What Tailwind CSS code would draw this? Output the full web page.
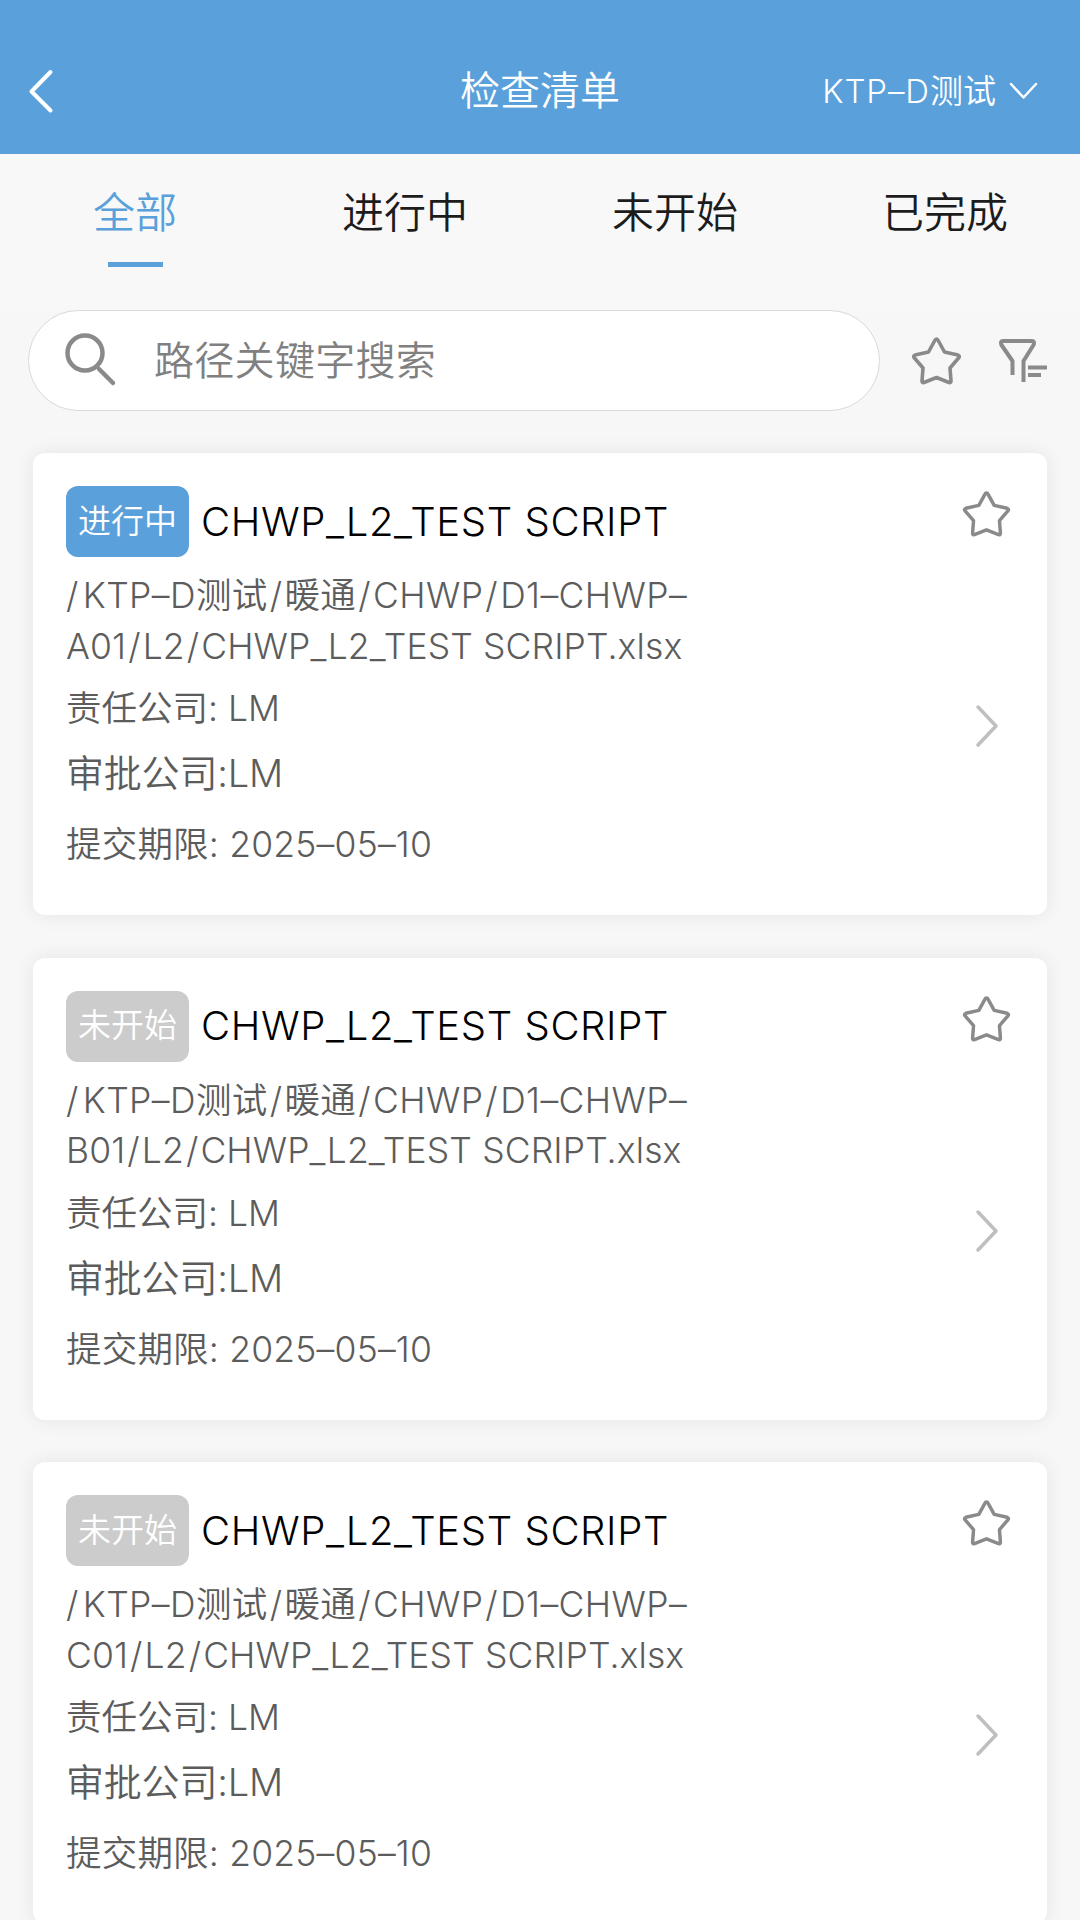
<!DOCTYPE html>
<html lang="zh-CN">
  <head>
    <meta charset="UTF-8" />
    <meta name="viewport" content="width=device-width, initial-scale=1.0" />
    <title>检查清单</title>
    <script src="https://cdn.jsdelivr.net/npm/@tailwindcss/browser@4"></script>
  </head>
  <body class="h-[1920px] overflow-hidden bg-[#f7f7f7] font-['Inter','Noto_Sans_CJK_SC',sans-serif] font-[350]">
    <!-- Header -->
    <header class="grid h-[154px] grid-cols-3 items-center bg-[#5aa0da] pt-[28px] text-white">
      <svg class="ml-[27px] h-[46px] w-[28px]" viewBox="0 0 28 46" fill="none" stroke="currentColor" stroke-width="4" stroke-linecap="round" stroke-linejoin="round">
        <path d="M23.5 4L4.5 23.5L23.5 42.5" />
      </svg>
      <h1 class="text-center text-[40px] leading-[40px]">检查清单</h1>
      <div class="flex items-center justify-end pr-[42px]">
        <span class="text-[33px] leading-[40px]"><span class="tracking-[0.9px]">KTP–D</span>测试</span>
        <svg class="ml-[13px] h-[18px] w-[29px]" viewBox="0 0 29 18" fill="none" stroke="currentColor" stroke-width="2.5" stroke-linecap="round" stroke-linejoin="round">
          <path d="M2 2L14.5 15.5L27 2" />
        </svg>
      </div>
    </header>

    <!-- Tabs -->
    <nav class="grid h-[156px] grid-cols-4 bg-[#f8f8f8] pt-[34px] text-center text-[42px] leading-[50px] text-[#1c1c1c]">
      <div class="flex flex-col items-center gap-[24px] text-[#5aa0da]">
        全部
        <span class="h-[5px] w-[55px] bg-[#5aa0da]"></span>
      </div>
      <div>进行中</div>
      <div>未开始</div>
      <div>已完成</div>
    </nav>

    <!-- Search -->
    <div class="flex items-center text-[#8a8a8a]">
      <div class="ml-[28px] flex h-[101px] w-[852px] items-center rounded-full border border-[#d9d9d9] bg-white pl-[34px]">
        <svg class="h-[56px] w-[56px]" viewBox="0 0 56 56" fill="none" stroke="currentColor" stroke-width="4.5" stroke-linecap="round">
          <circle cx="22" cy="20" r="17.5" />
          <path d="M36 36L50 50" />
        </svg>
        <span class="ml-[35px] text-[40px] leading-[48px] tracking-[0.3px] text-[#808080]">路径关键字搜索</span>
      </div>
      <svg class="ml-[31px] h-[50px] w-[51px]" viewBox="0 0 51 50" fill="none" stroke="currentColor" stroke-width="3.6" stroke-linejoin="round">
        <path d="M25.5 3Q26.500 3 27.200 4.500L33.500 16L47 19Q49 20 48 21.500L39 32L40 45Q40 47 38 46.500L25.500 41.500L13 46.500Q11 47 11 45L12 32L3 21.500Q2 20 4 19L17.500 16L23.800 4.500Q24.500 3 25.500 3Z" />
      </svg>
      <svg class="ml-[36px] h-[46px] w-[50px]" viewBox="0 0 50 46" fill="none" stroke="currentColor" stroke-width="4" stroke-linejoin="round">
        <path d="M14.5 37V23L3.5 7Q2 3 5 3H34Q37 3 35.5 7L25.5 23V44M30 29.500H49M30 37H43" />
      </svg>
    </div>

    <!-- Checklist cards -->
    <main class="flex flex-col gap-[42.5px] px-[33px] pt-[42px] text-[35.5px] text-[#5c5c5c]">
      <article class="flex h-[462px] shrink-0 justify-between rounded-xl bg-white pt-[33px] pr-[36px] pl-[33px] shadow-[0_0_20px_rgba(0,0,0,0.08)]">
        <div>
          <div class="flex items-center">
            <span class="flex h-[71px] w-[123px] items-center justify-center rounded-xl bg-[#5aa0da] text-[33px] text-white">进行中</span>
            <h2 class="ml-[12px] text-[40px] leading-[50px] tracking-[0.6px] text-black">CHWP_L2_TEST SCRIPT</h2>
          </div>
          <p class="mt-[14px] leading-[50.5px] tracking-[0.4px] whitespace-nowrap"><span class="mr-[4px]">/</span>KTP–D测试<span class="mx-[2px]">/</span>暖通<span class="mx-[2px]">/</span>CHWP<span class="mx-[2px]">/</span>D1–CHWP–</p>
          <p class="leading-[50.5px] tracking-[0.12px] whitespace-nowrap">A01<span class="mx-[2px]">/</span>L2<span class="mx-[2px]">/</span>CHWP_L2_TEST SCRIPT.xlsx</p>
          <p class="mt-[12px] leading-[50px]">责任公司: LM</p>
          <p class="mt-[14px] text-[38px] leading-[50px] tracking-[-0.2px]">审批公司:LM</p>
          <p class="mt-[22px] leading-[50px] tracking-[0.2px]">提交期限: 2025–05–10</p>
        </div>
        <div class="flex flex-col items-center">
          <svg class="mt-[4px] h-[48px] w-[49px] text-[#8a8a8a]" viewBox="0 0 51 50" fill="none" stroke="currentColor" stroke-width="3.6" stroke-linejoin="round">
            <path d="M25.5 3Q26.500 3 27.200 4.500L33.500 16L47 19Q49 20 48 21.500L39 32L40 45Q40 47 38 46.500L25.500 41.500L13 46.500Q11 47 11 45L12 32L3 21.500Q2 20 4 19L17.500 16L23.800 4.500Q24.500 3 25.500 3Z" />
          </svg>
          <svg class="mt-[166px] h-[44px] w-[24px] text-[#bfbfbf]" viewBox="0 0 24 44" fill="none" stroke="currentColor" stroke-width="3.5" stroke-linecap="round" stroke-linejoin="round">
            <path d="M3 3L21 22L3 41" />
          </svg>
        </div>
      </article>

      <article class="flex h-[462px] shrink-0 justify-between rounded-xl bg-white pt-[33px] pr-[36px] pl-[33px] shadow-[0_0_20px_rgba(0,0,0,0.08)]">
        <div>
          <div class="flex items-center">
            <span class="flex h-[71px] w-[123px] items-center justify-center rounded-xl bg-[#cccccc] text-[33px] text-white">未开始</span>
            <h2 class="ml-[12px] text-[40px] leading-[50px] tracking-[0.6px] text-black">CHWP_L2_TEST SCRIPT</h2>
          </div>
          <p class="mt-[14px] leading-[50.5px] tracking-[0.4px] whitespace-nowrap"><span class="mr-[4px]">/</span>KTP–D测试<span class="mx-[2px]">/</span>暖通<span class="mx-[2px]">/</span>CHWP<span class="mx-[2px]">/</span>D1–CHWP–</p>
          <p class="leading-[50.5px] tracking-[0.12px] whitespace-nowrap">B01<span class="mx-[2px]">/</span>L2<span class="mx-[2px]">/</span>CHWP_L2_TEST SCRIPT.xlsx</p>
          <p class="mt-[12px] leading-[50px]">责任公司: LM</p>
          <p class="mt-[14px] text-[38px] leading-[50px] tracking-[-0.2px]">审批公司:LM</p>
          <p class="mt-[22px] leading-[50px] tracking-[0.2px]">提交期限: 2025–05–10</p>
        </div>
        <div class="flex flex-col items-center">
          <svg class="mt-[4px] h-[48px] w-[49px] text-[#8a8a8a]" viewBox="0 0 51 50" fill="none" stroke="currentColor" stroke-width="3.6" stroke-linejoin="round">
            <path d="M25.5 3Q26.500 3 27.200 4.500L33.500 16L47 19Q49 20 48 21.500L39 32L40 45Q40 47 38 46.500L25.500 41.500L13 46.500Q11 47 11 45L12 32L3 21.500Q2 20 4 19L17.500 16L23.800 4.500Q24.500 3 25.500 3Z" />
          </svg>
          <svg class="mt-[166px] h-[44px] w-[24px] text-[#bfbfbf]" viewBox="0 0 24 44" fill="none" stroke="currentColor" stroke-width="3.5" stroke-linecap="round" stroke-linejoin="round">
            <path d="M3 3L21 22L3 41" />
          </svg>
        </div>
      </article>

      <article class="flex h-[462px] shrink-0 justify-between rounded-xl bg-white pt-[33px] pr-[36px] pl-[33px] shadow-[0_0_20px_rgba(0,0,0,0.08)]">
        <div>
          <div class="flex items-center">
            <span class="flex h-[71px] w-[123px] items-center justify-center rounded-xl bg-[#cccccc] text-[33px] text-white">未开始</span>
            <h2 class="ml-[12px] text-[40px] leading-[50px] tracking-[0.6px] text-black">CHWP_L2_TEST SCRIPT</h2>
          </div>
          <p class="mt-[14px] leading-[50.5px] tracking-[0.4px] whitespace-nowrap"><span class="mr-[4px]">/</span>KTP–D测试<span class="mx-[2px]">/</span>暖通<span class="mx-[2px]">/</span>CHWP<span class="mx-[2px]">/</span>D1–CHWP–</p>
          <p class="leading-[50.5px] tracking-[0.12px] whitespace-nowrap">C01<span class="mx-[2px]">/</span>L2<span class="mx-[2px]">/</span>CHWP_L2_TEST SCRIPT.xlsx</p>
          <p class="mt-[12px] leading-[50px]">责任公司: LM</p>
          <p class="mt-[14px] text-[38px] leading-[50px] tracking-[-0.2px]">审批公司:LM</p>
          <p class="mt-[22px] leading-[50px] tracking-[0.2px]">提交期限: 2025–05–10</p>
        </div>
        <div class="flex flex-col items-center">
          <svg class="mt-[4px] h-[48px] w-[49px] text-[#8a8a8a]" viewBox="0 0 51 50" fill="none" stroke="currentColor" stroke-width="3.6" stroke-linejoin="round">
            <path d="M25.5 3Q26.500 3 27.200 4.500L33.500 16L47 19Q49 20 48 21.500L39 32L40 45Q40 47 38 46.500L25.500 41.500L13 46.500Q11 47 11 45L12 32L3 21.500Q2 20 4 19L17.500 16L23.800 4.500Q24.500 3 25.500 3Z" />
          </svg>
          <svg class="mt-[166px] h-[44px] w-[24px] text-[#bfbfbf]" viewBox="0 0 24 44" fill="none" stroke="currentColor" stroke-width="3.5" stroke-linecap="round" stroke-linejoin="round">
            <path d="M3 3L21 22L3 41" />
          </svg>
        </div>
      </article>
    </main>
  </body>
</html>
